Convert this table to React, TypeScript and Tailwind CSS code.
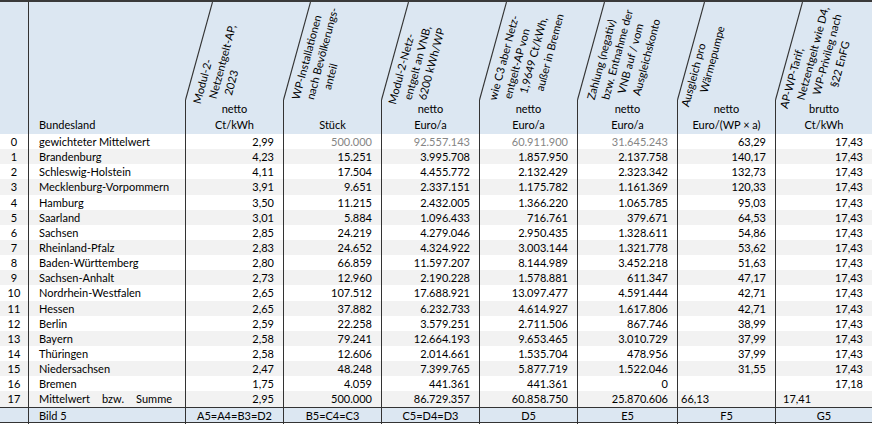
const grid = "grid grid-cols-[28px_157px_98px_98px_98px_98px_100px_98px_97px]";

type HeadLine = { t: string; c: string };
type HeadCol = { lines: HeadLine[]; pos: string; units: string[] };

// rotated header blocks, shifted to where Excel puts them
const heads: HeadCol[] = [
  {
    pos: "translate-x-[-15px] translate-y-[24px]",
    lines: [
      { t: "Modul-2-", c: "mr-[20px]" },
      { t: "Netzentgelt-AP,", c: "ml-[28px]" },
      { t: "2023", c: "mr-[8px]" },
    ],
    units: ["netto", "Ct/kWh"],
  },
  {
    pos: "translate-x-[-12px] translate-y-[11px]",
    lines: [
      { t: "WP-Installationen", c: "ml-[3px]" },
      { t: "nach Bevölkerungs-", c: "ml-[18px]" },
      { t: "anteil", c: "mr-[22px]" },
    ],
    units: ["Stück"],
  },
  {
    pos: "translate-x-[-13px] translate-y-[14px]",
    lines: [
      { t: "Modul-2-Netz-", c: "mr-[15px]" },
      { t: "entgelt an VNB,", c: "ml-[5px]" },
      { t: "6200 kWh/WP", c: "ml-[10px]" },
    ],
    units: ["netto", "Euro/a"],
  },
  {
    pos: "translate-x-[-2px] translate-y-[6px]",
    lines: [
      { t: "wie C3 aber Netz-", c: "mr-[12px]" },
      { t: "entgelt-AP von", c: "mr-[17px]" },
      { t: "1,9649 Ct/kWh,", c: "ml-[8px]" },
      { t: "außer in Bremen", c: "ml-[22px]" },
    ],
    units: ["netto", "Euro/a"],
  },
  {
    pos: "translate-x-[-3px] translate-y-[6px]",
    lines: [
      { t: "Zahlung (negativ)", c: "mr-[16px]" },
      { t: "bzw. Entnahme der", c: "ml-[2px]" },
      { t: "VNB auf / vom", c: "ml-[1px]" },
      { t: "Ausgleichskonto", c: "ml-[12px]" },
    ],
    units: ["netto", "Euro/a"],
  },
  {
    pos: "translate-x-[-23px] translate-y-[16px]",
    lines: [
      { t: "Ausgleich pro", c: "mr-[20px]" },
      { t: "Wärmepumpe", c: "ml-[20px]" },
    ],
    units: ["netto", "Euro/(WP × a)"],
  },
  {
    pos: "translate-x-[-6px] translate-y-[11px]",
    lines: [
      { t: "AP-WP-Tarif,", c: "mr-[44px]" },
      { t: "Netzentgelt wie D4,", c: "ml-[15px]" },
      { t: "WP-Privileg nach", c: "ml-[20px]" },
      { t: "§22 EnFG", c: "ml-[8px]" },
    ],
    units: ["brutto", "Ct/kWh"],
  },
];

const rows: string[][] = [
  ["0", "gewichteter Mittelwert", "2,99", "500.000", "92.557.143", "60.911.900", "31.645.243", "63,29", "17,43"],
  ["1", "Brandenburg", "4,23", "15.251", "3.995.708", "1.857.950", "2.137.758", "140,17", "17,43"],
  ["2", "Schleswig-Holstein", "4,11", "17.504", "4.455.772", "2.132.429", "2.323.342", "132,73", "17,43"],
  ["3", "Mecklenburg-Vorpommern", "3,91", "9.651", "2.337.151", "1.175.782", "1.161.369", "120,33", "17,43"],
  ["4", "Hamburg", "3,50", "11.215", "2.432.005", "1.366.220", "1.065.785", "95,03", "17,43"],
  ["5", "Saarland", "3,01", "5.884", "1.096.433", "716.761", "379.671", "64,53", "17,43"],
  ["6", "Sachsen", "2,85", "24.219", "4.279.046", "2.950.435", "1.328.611", "54,86", "17,43"],
  ["7", "Rheinland-Pfalz", "2,83", "24.652", "4.324.922", "3.003.144", "1.321.778", "53,62", "17,43"],
  ["8", "Baden-Württemberg", "2,80", "66.859", "11.597.207", "8.144.989", "3.452.218", "51,63", "17,43"],
  ["9", "Sachsen-Anhalt", "2,73", "12.960", "2.190.228", "1.578.881", "611.347", "47,17", "17,43"],
  ["10", "Nordrhein-Westfalen", "2,65", "107.512", "17.688.921", "13.097.477", "4.591.444", "42,71", "17,43"],
  ["11", "Hessen", "2,65", "37.882", "6.232.733", "4.614.927", "1.617.806", "42,71", "17,43"],
  ["12", "Berlin", "2,59", "22.258", "3.579.251", "2.711.506", "867.746", "38,99", "17,43"],
  ["13", "Bayern", "2,58", "79.241", "12.664.193", "9.653.465", "3.010.729", "37,99", "17,43"],
  ["14", "Thüringen", "2,58", "12.606", "2.014.661", "1.535.704", "478.956", "37,99", "17,43"],
  ["15", "Niedersachsen", "2,47", "48.248", "7.399.765", "5.877.719", "1.522.046", "31,55", "17,43"],
  ["16", "Bremen", "1,75", "4.059", "441.361", "441.361", "0", "", "17,18"],
];

const footer = ["A5=A4=B3=D2", "B5=C4=C3", "C5=D4=D3", "D5", "E5", "F5", "G5"];
const slants = [185, 283, 381, 479, 577, 677, 775];

function Header() {
  return (
    <div className={`${grid} relative h-[132px] bg-[#dce7f2]`}>
      <div />
      <div className="border-l border-[#333] flex items-end pl-[10px] pb-[1px] leading-[16px]">
        Bundesland
      </div>
      {heads.map((h, i) => (
        <div key={i} className="flex flex-col">
          <div className="h-[98px] flex items-center justify-center">
            <div className={`w-[130px] shrink-0 -rotate-75 leading-[14.2px] whitespace-nowrap text-center ${h.pos}`}>
              {h.lines.map((l) => (
                <div key={l.t} className={l.c}>
                  {l.t}
                </div>
              ))}
            </div>
          </div>
          <div className="h-[34px] border-l border-[#333] flex flex-col justify-end items-center leading-[16px] pb-[1px]">
            {h.units.map((u) => (
              <div key={u}>{u}</div>
            ))}
          </div>
        </div>
      ))}
      <svg className="absolute inset-0 pointer-events-none" width="872" height="132">
        {slants.map((x) => (
          <line key={x} x1={x + 0.5} y1={98} x2={x + 27.5} y2={0} stroke="#333" strokeWidth="1.1" />
        ))}
      </svg>
    </div>
  );
}

function Row({ r, i }: { r: string[]; i: number }) {
  const grayFirst = i === 0;
  return (
    <div className={`${grid} h-[15.15px] ${i % 2 ? "bg-[#f2f2f2]" : "bg-white"}`}>
      <div className="flex items-center justify-center">{r[0]}</div>
      <div className="border-l border-[#333] flex items-center pl-[10px]">{r[1]}</div>
      {r.slice(2).map((v, j) => (
        <div
          key={j}
          className={`border-l border-[#333] flex items-center justify-end pr-[9px] ${
            grayFirst && j >= 1 && j <= 4 ? "text-[#858585]" : ""
          }`}
        >
          {v}
        </div>
      ))}
    </div>
  );
}

export default function App() {
  return (
    <div className="w-[872px] h-[424px] bg-white overflow-hidden font-['Lato','Liberation_Sans',sans-serif] text-[11px] text-black tabular-nums">
      <div className="border-t-2 border-[#3a3a3a]">
        <Header />
        {rows.map((r, i) => (
          <Row key={r[0]} r={r} i={i} />
        ))}
        <div className={`${grid} h-[15.15px] bg-[#f2f2f2]`}>
          <div className="flex items-center justify-center">17</div>
          <div className="border-l border-[#333] flex items-center justify-between pl-[10px] pr-[13px]">
            <span>Mittelwert</span>
            <span>bzw.</span>
            <span>Summe</span>
          </div>
          <div className="border-l border-[#333] flex items-center justify-end pr-[9px]">2,95</div>
          <div className="border-l border-[#333] flex items-center justify-end pr-[9px]">500.000</div>
          <div className="border-l border-[#333] flex items-center justify-end pr-[9px]">86.729.357</div>
          <div className="border-l border-[#333] flex items-center justify-end pr-[9px]">60.858.750</div>
          <div className="border-l border-[#333] flex items-center justify-end pr-[9px]">25.870.606</div>
          <div className="border-l border-[#333] flex items-center pl-[3px]">66,13</div>
          <div className="border-l border-[#333] flex items-center pl-[7px]">17,41</div>
        </div>
        <div className={`${grid} h-[16px] bg-[#dce7f2] border-y border-[#333]`}>
          <div />
          <div className="border-l border-[#333] flex items-center pl-[10px]">Bild 5</div>
          {footer.map((f) => (
            <div key={f} className="border-l border-[#333] flex items-center justify-center">
              {f}
            </div>
          ))}
        </div>
      </div>
    </div>
  );
}
